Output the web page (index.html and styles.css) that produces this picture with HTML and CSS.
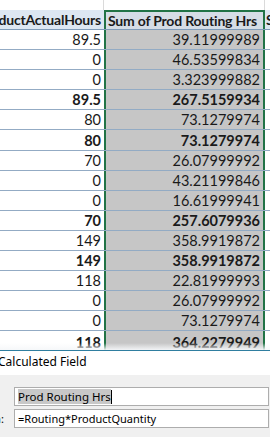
FILE: index.html
```html
<!DOCTYPE html>
<html lang="en">
<head>
    <meta charset="UTF-8">
    <title>Calculated Field</title>
    <link rel="stylesheet" href="styles.css">
</head>
<body>
    <div class="sheet">
        <div class="row top">
            <div class="cell c1"></div>
            <div class="cell c2"></div>
            <div class="cell c3"></div>
        </div>
        <div class="row head">
            <div class="cell c1"><span>Sum of ProductActualHours</span></div>
            <div class="cell c2 sel">Sum of Prod Routing Hrs</div>
            <div class="cell c3">Sum</div>
        </div>
        <div class="row"><div class="cell c1">89.5</div><div class="cell c2 sel">39.11999989</div><div class="cell c3"></div></div>
        <div class="row"><div class="cell c1">0</div><div class="cell c2 sel">46.53599834</div><div class="cell c3"></div></div>
        <div class="row"><div class="cell c1">0</div><div class="cell c2 sel">3.323999882</div><div class="cell c3"></div></div>
        <div class="row total"><div class="cell c1">89.5</div><div class="cell c2 sel">267.5159934</div><div class="cell c3"></div></div>
        <div class="row"><div class="cell c1">80</div><div class="cell c2 sel">73.1279974</div><div class="cell c3"></div></div>
        <div class="row total"><div class="cell c1">80</div><div class="cell c2 sel">73.1279974</div><div class="cell c3"></div></div>
        <div class="row"><div class="cell c1">70</div><div class="cell c2 sel">26.07999992</div><div class="cell c3"></div></div>
        <div class="row"><div class="cell c1">0</div><div class="cell c2 sel">43.21199846</div><div class="cell c3"></div></div>
        <div class="row"><div class="cell c1">0</div><div class="cell c2 sel">16.61999941</div><div class="cell c3"></div></div>
        <div class="row total"><div class="cell c1">70</div><div class="cell c2 sel">257.6079936</div><div class="cell c3"></div></div>
        <div class="row"><div class="cell c1">149</div><div class="cell c2 sel">358.9919872</div><div class="cell c3"></div></div>
        <div class="row total"><div class="cell c1">149</div><div class="cell c2 sel">358.9919872</div><div class="cell c3"></div></div>
        <div class="row"><div class="cell c1">118</div><div class="cell c2 sel">22.81999993</div><div class="cell c3"></div></div>
        <div class="row"><div class="cell c1">0</div><div class="cell c2 sel">26.07999992</div><div class="cell c3"></div></div>
        <div class="row"><div class="cell c1">0</div><div class="cell c2 sel">73.1279974</div><div class="cell c3"></div></div>
        <div class="row total last"><div class="cell c1">118</div><div class="cell c2 sel">364.2279949</div><div class="cell c3"></div></div>
    </div>

    <div class="dialog">
        <div class="dialog-title">Calculated Field</div>
        <div class="dialog-body">
            <div class="field">
                <label>Name:</label>
                <div class="input"><span class="selected">Prod Routing Hrs</span><span class="caret"></span></div>
            </div>
            <div class="field">
                <label>Formula:</label>
                <div class="input">=Routing*ProductQuantity</div>
            </div>
        </div>
    </div>
</body>
</html>
```

FILE: styles.css
```css
* { margin: 0; padding: 0; box-sizing: border-box; }
body {
    width: 270px;
    height: 437px;
    overflow: hidden;
    background: #ffffff;
    font-family: Lato, "Open Sans", sans-serif;
}

/* spreadsheet */
.sheet {
    height: 350px;
    overflow: hidden;
    font-size: 14.5px;
    color: #1a1a1a;
}
.row {
    display: grid;
    grid-template-columns: 104px 161px 1fr;
    height: 20.1px;
    border-bottom: 1px solid #93abc4;
}
.cell {
    display: flex;
    align-items: center;
    justify-content: flex-end;
    padding-right: 3px;
    white-space: nowrap;
    overflow: hidden;
}
.row.top { height: 10px; border-bottom: none; }
.row.top .c1 { border-right: 1px solid #dadada; }
.row.top .c2 { border-right: 1px solid #dadada; }

.row.head {
    height: 20px;
    background: #dde7f2;
    font-weight: bold;
    font-size: 14px;
    letter-spacing: -0.2px;
    border-bottom: 1px solid #7f9cba;
}
.row.head .c2 { justify-content: flex-start; padding-left: 2px; }
.row.head .c3 { justify-content: flex-start; padding-left: 1px; }
.row.head .sel { border-top: 2px solid #217346; background: #d5dde6; }

.row.total { font-weight: bold; }
.row.last .cell { align-items: flex-end; padding-bottom: 0; }

.sel {
    background: #c6c6c6;
    border-left: 2px solid #217346;
    border-right: 2px solid #217346;
}

/* dialog */
.dialog {
    position: relative;
    border-top: 1px solid #2f7ea0;
    font-family: "Noto Sans", "Open Sans", sans-serif;
    font-size: 11px;
    color: #000;
}
.dialog::before {
    content: "";
    position: absolute;
    left: 0;
    right: 0;
    top: -8px;
    height: 7px;
    background: linear-gradient(rgba(245, 247, 249, 0), rgba(245, 247, 249, 0.95));
}
.dialog-title {
    height: 24px;
    padding-top: 2px;
    font-size: 12px;
    background: #ffffff;
    margin-left: -2px;
}
.dialog-body {
    background: #f0f0f0;
    height: 62px;
    padding-top: 12px;
    display: flex;
    flex-direction: column;
    gap: 3px;
}
.field {
    display: flex;
    align-items: center;
    gap: 4px;
}
.field label {
    width: 52px;
    margin-left: -42px;
    flex-shrink: 0;
    white-space: nowrap;
}
.input {
    flex: 1;
    height: 19px;
    margin-right: 1px;
    background: #ffffff;
    border: 1px solid #adadad;
    display: flex;
    align-items: center;
    padding-left: 3px;
    font-size: 11px;
}
.input .selected { font-size: 11.5px; }
.selected { background: #c8c8c8; }
.caret {
    width: 1px;
    height: 14px;
    background: #000;
}
```
